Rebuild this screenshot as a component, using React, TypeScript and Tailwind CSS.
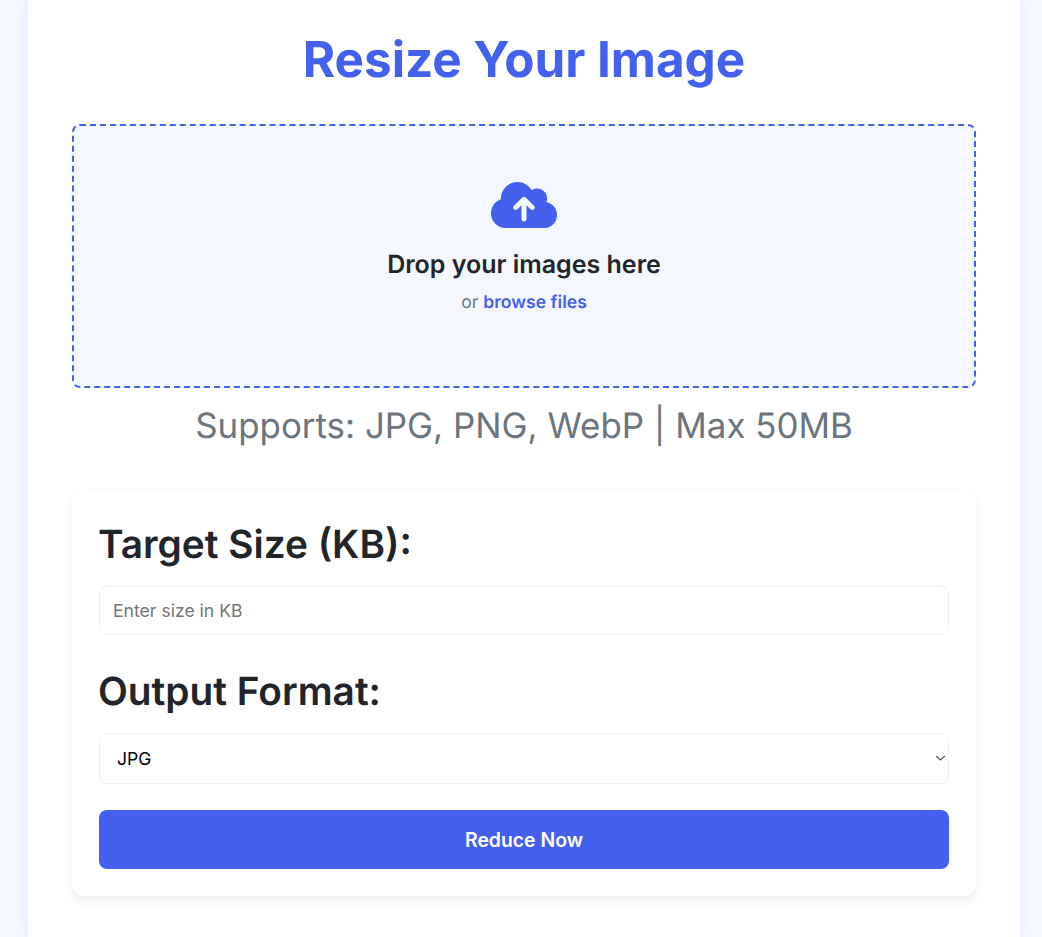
import React from 'react'
import { FaCloudArrowUp } from 'react-icons/fa6'

function App() {
  return (
    <div className="min-h-[937px] bg-[#f5f7ff] font-['Inter',sans-serif] [text-rendering:geometricPrecision] overflow-hidden">
      <div className="mx-auto h-[937px] w-[992px] bg-white px-[44px] shadow-[0_0_15px_rgba(67,97,238,0.1)] relative left-[3px]">
        {/* heading */}
        <h1 className="pt-[30px] text-center text-[49.4px] leading-[58px] font-bold text-[#4361ee]">
          Resize Your Image
        </h1>

        {/* drop zone */}
        <div className="mt-[36px] flex h-[264px] flex-col items-center rounded-lg border-2 border-dashed border-[#4361ee] bg-[#f5f7ff] pt-[52px]">
          <FaCloudArrowUp className="h-[54px] w-[66px] text-[#4361ee]" />
          <p className="mt-[19px] text-[25px] leading-[29px] font-semibold text-[#212529]">Drop your images here</p>
          <p className="mt-[10px] text-[17.6px] leading-[26px] text-[#6c757d]">
            or <span className="font-semibold text-[#4361ee]">browse files</span>
          </p>
        </div>
        <p className="mt-[14px] text-center text-[34.9px] leading-[48px] text-[#6c757d]">
          Supports: JPG, PNG, WebP | Max 50MB
        </p>

        {/* settings */}
        <div className="mt-[40px] h-[406px] rounded-xl bg-white px-[27px] pt-[31px] shadow-[0_4px_12px_rgba(0,0,0,0.08)]">
          <label className="-ml-px block text-[38.8px] leading-[48px] font-semibold text-[#212529]">Target Size (KB):</label>
          <input
            placeholder="Enter size in KB"
            className="mt-[17px] h-[49px] w-full rounded-lg border border-[#f0f0f0] px-[13px] text-[17.6px] outline-none placeholder:text-[#757575]"
          />
          <label className="-ml-px mt-[33px] block text-[38.8px] leading-[48px] font-semibold text-[#212529]">Output Format:</label>
          <div className="relative mt-[17px]">
            <select className="h-[51px] w-full appearance-none rounded-lg border border-[#f0f0f0] bg-white px-[17px] pt-[2px] text-[17.6px] text-black">
              <option>JPG</option>
              <option>PNG</option>
              <option>WebP</option>
            </select>
            <svg className="pointer-events-none absolute right-[3px] top-[22px] h-[6px] w-[11px]" viewBox="0 0 11 6" fill="none">
              <path d="M1 1l4.5 4L10 1" stroke="#555" strokeWidth="1.1" />
            </svg>
          </div>
          <button className="mt-[26px] h-[59px] w-full rounded-lg bg-[#4361ee] pt-[2px] text-[19.4px] font-semibold text-white">
            Reduce Now
          </button>
        </div>
      </div>
    </div>
  )
}

export default App
